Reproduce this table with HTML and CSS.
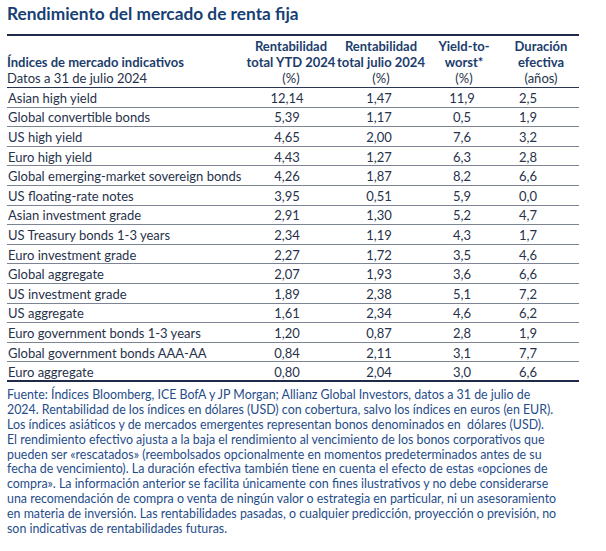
FILE: index.html
```html
<!DOCTYPE html>
<html lang="es">
<head>
<meta charset="utf-8">
<title>Rendimiento del mercado de renta fija</title>
<link rel="stylesheet" href="styles.css">
</head>
<body>
<div class="page">
  <h1 class="title">Rendimiento del mercado de renta fija</h1>
  <table class="perf">
    <colgroup>
      <col class="c-name"><col class="c-num"><col class="c-num2"><col class="c-num3"><col class="c-num4">
    </colgroup>
    <thead>
      <tr>
        <th class="name"><span class="strong">Índices de mercado indicativos</span><br><span class="sub">Datos a 31 de julio 2024</span></th>
        <th><span class="strong">Rentabilidad<br>total YTD 2024</span><br><span class="sub">(%)</span></th>
        <th><span class="strong">Rentabilidad<br>total julio 2024</span><br><span class="sub">(%)</span></th>
        <th><span class="strong">Yield-to-<br>worst*</span><br><span class="sub">(%)</span></th>
        <th><span class="strong">Duración<br>efectiva</span><br><span class="sub">(años)</span></th>
      </tr>
    </thead>
    <tbody>
      <tr><td>Asian high yield</td><td>12,14</td><td>1,47</td><td>11,9</td><td>2,5</td></tr>
      <tr><td>Global convertible bonds</td><td>5,39</td><td>1,17</td><td>0,5</td><td>1,9</td></tr>
      <tr><td>US high yield</td><td>4,65</td><td>2,00</td><td>7,6</td><td>3,2</td></tr>
      <tr><td>Euro high yield</td><td>4,43</td><td>1,27</td><td>6,3</td><td>2,8</td></tr>
      <tr><td>Global emerging-market sovereign bonds</td><td>4,26</td><td>1,87</td><td>8,2</td><td>6,6</td></tr>
      <tr><td>US floating-rate notes</td><td>3,95</td><td>0,51</td><td>5,9</td><td>0,0</td></tr>
      <tr><td>Asian investment grade</td><td>2,91</td><td>1,30</td><td>5,2</td><td>4,7</td></tr>
      <tr><td>US Treasury bonds 1-3 years</td><td>2,34</td><td>1,19</td><td>4,3</td><td>1,7</td></tr>
      <tr><td>Euro investment grade</td><td>2,27</td><td>1,72</td><td>3,5</td><td>4,6</td></tr>
      <tr><td>Global aggregate</td><td>2,07</td><td>1,93</td><td>3,6</td><td>6,6</td></tr>
      <tr><td>US investment grade</td><td>1,89</td><td>2,38</td><td>5,1</td><td>7,2</td></tr>
      <tr><td>US aggregate</td><td>1,61</td><td>2,34</td><td>4,6</td><td>6,2</td></tr>
      <tr><td>Euro government bonds 1-3 years</td><td>1,20</td><td>0,87</td><td>2,8</td><td>1,9</td></tr>
      <tr><td>Global government bonds AAA-AA</td><td>0,84</td><td>2,11</td><td>3,1</td><td>7,7</td></tr>
      <tr><td>Euro aggregate</td><td>0,80</td><td>2,04</td><td>3,0</td><td>6,6</td></tr>
    </tbody>
  </table>
  <p class="note">Fuente: Índices Bloomberg, ICE BofA y JP Morgan; Allianz Global Investors, datos a 31 de julio de<br>2024. Rentabilidad de los índices en dólares (USD) con cobertura, salvo los índices en euros (en EUR).<br>Los índices asiáticos y de mercados emergentes representan bonos denominados en &nbsp;dólares (USD).<br>El rendimiento efectivo ajusta a la baja el rendimiento al vencimiento de los bonos corporativos que<br>pueden ser «rescatados» (reembolsados opcionalmente en momentos predeterminados antes de su<br>fecha de vencimiento). La duración efectiva también tiene en cuenta el efecto de estas «opciones de<br>compra». La información anterior se facilita únicamente con fines ilustrativos y no debe considerarse<br>una recomendación de compra o venta de ningún valor o estrategia en particular, ni un asesoramiento<br>en materia de inversión. Las rentabilidades pasadas, o cualquier predicción, proyección o previsión, no<br>son indicativas de rentabilidades futuras.</p>
</div>
</body>
</html>
```

FILE: styles.css
```css
* { box-sizing: border-box; }
html, body { margin: 0; padding: 0; background: #ffffff; }
body { font-family: Lato, "Open Sans", sans-serif; }

.page {
  width: 606px;
  padding: 3px 0 0 7px;
}

.title {
  margin: 0;
  font-size: 17.3px;
  line-height: 21px;
  font-weight: 700;
  color: #173f73;
  height: 31px;
}

.perf {
  width: 572px;
  border-collapse: collapse;
  table-layout: fixed;
  color: #27324a;
  font-size: 13px;
}
.c-name { width: 238px; }
.c-num { width: 92px; }
.c-num2 { width: 88px; }
.c-num3 { width: 78px; }
.c-num4 { width: 76px; }

.perf thead tr {
  border-top: 2px solid #1e2a48;
  border-bottom: 1.5px solid #2a3550;
}
.perf th {
  padding: 2px 0 1px;
  line-height: 16px;
  vertical-align: bottom;
  text-align: center;
  font-weight: 400;
  color: #1c3d6c;
}
.perf th.name { text-align: left; }
.perf .strong { font-weight: 700; }
.perf .sub { color: #27324a; }

.perf tbody tr { border-bottom: 1px solid #7d8494; }
.perf tbody tr:last-child { border-bottom: 2px solid #1e2a48; }
.perf td {
  height: 19.6px;
  padding: 1px 0 0;
  text-align: center;
  white-space: nowrap;
  line-height: 16px;
}
.perf td:first-child { text-align: left; padding-left: 1px; }
.perf td:nth-child(2) { padding-right: 8px; }
.perf td:nth-child(3) { padding-right: 4px; }
.perf td:nth-child(4) { padding-right: 4px; }
.perf td:nth-child(5) { padding-right: 26px; }

.note {
  margin: 6px 0 0;
  font-size: 12.4px;
  line-height: 14.8px;
  color: #1f4d8a;
  white-space: nowrap;
}
```
